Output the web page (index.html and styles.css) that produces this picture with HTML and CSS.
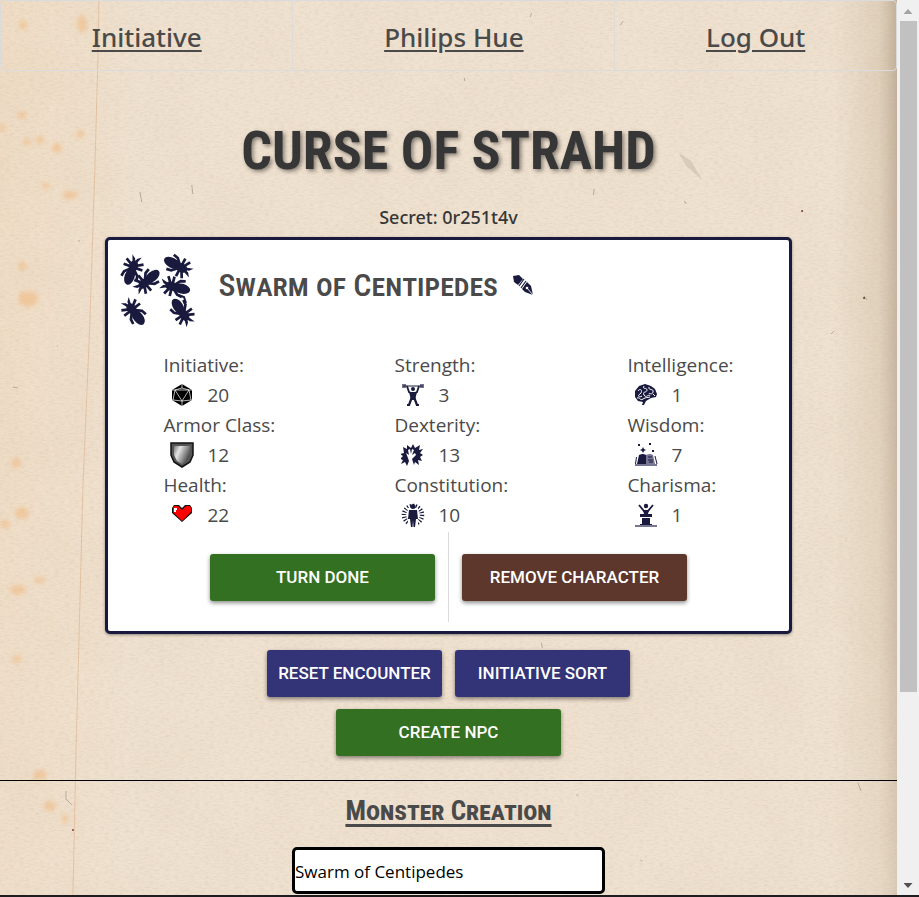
FILE: index.html
```html
<!DOCTYPE html>
<html lang="en">
<head>
<meta charset="utf-8">
<meta name="viewport" content="width=device-width, initial-scale=1">
<title>Curse of Strahd</title>
<link rel="stylesheet" href="styles.css">
</head>
<body>
<div class="page">
  <svg class="paper" aria-hidden="true" viewBox="0 0 898 895" preserveAspectRatio="none">
    <defs>
      <filter id="grain" x="0" y="0" width="100%" height="100%">
        <feTurbulence type="fractalNoise" baseFrequency="0.2 0.6" numOctaves="3" seed="4"/>
        <feColorMatrix values="0 0 0 0 .5  0 0 0 0 .4  0 0 0 0 .28  .9 0 0 0 -.36"/>
      </filter>
      <filter id="mottle" x="0" y="0" width="100%" height="100%">
        <feTurbulence type="fractalNoise" baseFrequency="0.015" numOctaves="3" seed="9"/>
        <feColorMatrix values="0 0 0 0 .72  0 0 0 0 .6  0 0 0 0 .46  .9 0 0 0 -.34"/>
      </filter>
      <filter id="soft"><feGaussianBlur stdDeviation="2"/></filter>
      <linearGradient id="edge">
        <stop offset="0" stop-color="#f0c898" stop-opacity=".2"/>
        <stop offset=".1" stop-color="#f0cf9c" stop-opacity=".1"/>
        <stop offset=".14" stop-color="#f0cf9c" stop-opacity="0"/>
        <stop offset=".93" stop-color="#a08c68" stop-opacity="0"/>
        <stop offset=".98" stop-color="#a08c68" stop-opacity=".2"/>
        <stop offset="1" stop-color="#80684a" stop-opacity=".42"/>
      </linearGradient>
      <linearGradient id="fade" x2="0" y2="1">
        <stop offset="0" stop-color="#fff"/><stop offset=".55" stop-color="#fff" stop-opacity=".8"/><stop offset="1" stop-color="#fff" stop-opacity=".45"/>
      </linearGradient>
      <mask id="fademask"><rect width="898" height="895" fill="url(#fade)"/></mask>
    </defs>
    <rect width="898" height="895" fill="#f0e2d1"/>
    <rect width="898" height="895" filter="url(#mottle)" opacity=".3"/>
    <rect width="898" height="895" fill="url(#edge)" mask="url(#fademask)"/>
    <rect width="898" height="895" filter="url(#grain)" opacity=".42"/>
    <path d="M99 0 98 60 95 167 90 322 83 487 79 642 76 754 73 895" fill="none" stroke="#d9a67c" stroke-opacity=".5"/>
    <g fill="#f0ac65" fill-opacity=".42" filter="url(#soft)">
      <ellipse cx="23" cy="25" rx="4" ry="5"/><ellipse cx="82" cy="24" rx="5" ry="9"/><ellipse cx="22" cy="115" rx="4" ry="4"/>
      <ellipse cx="80" cy="134" rx="4" ry="4"/><ellipse cx="40" cy="140" rx="4" ry="4"/><ellipse cx="57" cy="148" rx="5" ry="5"/>
      <ellipse cx="27" cy="142" rx="4" ry="3"/><ellipse cx="2" cy="128" rx="3" ry="4"/><ellipse cx="70" cy="195" rx="8" ry="4"/>
      <ellipse cx="46" cy="186" rx="4" ry="3"/><ellipse cx="22" cy="266" rx="4" ry="4"/><ellipse cx="28" cy="299" rx="10" ry="8"/>
      <ellipse cx="16" cy="463" rx="5" ry="5"/><ellipse cx="22" cy="513" rx="7" ry="6"/><ellipse cx="5" cy="524" rx="5" ry="4"/>
      <ellipse cx="18" cy="590" rx="8" ry="5"/><ellipse cx="40" cy="580" rx="6" ry="3"/><ellipse cx="17" cy="659" rx="4" ry="4"/>
      <ellipse cx="40" cy="775" rx="7" ry="5"/><ellipse cx="50" cy="806" rx="6" ry="5"/><ellipse cx="65" cy="819" rx="3" ry="5"/>
    </g>
    <g stroke="#807466" stroke-opacity=".5" fill="none">
      <path d="m531 17 1-4m89 12 3-4m-159 57v3M140 192l2 10m51-8-1-9m402 10 1-6m90 12 2 3M13 387l5 1m60-147h2m-23 105h1M865 296l3 4m-36 34 3-3m24 452 3 8M542 643l1 5m-88 69 8-8M66 791v8l6 6M641 860l2 1m-38 16 1 1m-29-83h2"/>
    </g>
    <path d="m679 152 8 14 16 14-11-19z" fill="#8d7c66" fill-opacity=".2"/>
    <circle cx="865" cy="298" r="1" fill="#4b3d32"/>
    <circle cx="803" cy="211" r="1" fill="#7a3524"/>
    <circle cx="73" cy="830" r="1" fill="#7a4a2e"/>
  </svg>

  <nav class="nav">
    <a href="#initiative">Initiative</a>
    <a href="#hue">Philips Hue</a>
    <a href="#logout">Log Out</a>
  </nav>

  <main>
    <h1>CURSE OF STRAHD</h1>
    <p class="secret">Secret: 0r251t4v</p>

    <section class="card">
      <header class="card-head">
        <svg class="portrait" viewBox="5 7 76 76" aria-hidden="true">
          <defs>
            <g id="bug">
              <ellipse cy="7" rx="5" ry="8.500"/>
              <ellipse cy="-4" rx="4.500" ry="6"/>
              <path d="M-2-7-5-15-1-12 0-9 1-12 5-15 2-7z"/>
              <path d="M-2-5-9-9M2-5 9-9M-2-3-10-3M2-3 10-3M-2-1-7 4-8 9M2-1 7 4 8 9" fill="none" stroke="#191a3d" stroke-width="2.700"/>
            </g>
          </defs>
          <g fill="#191a3d">
            <use href="#bug" transform="translate(17 25) rotate(20)"/>
            <use href="#bug" transform="translate(32 36) rotate(230)"/>
            <use href="#bug" transform="translate(63 21) rotate(118)"/>
            <use href="#bug" transform="translate(60 42) rotate(284)"/>
            <use href="#bug" transform="translate(19 67) rotate(322)"/>
            <use href="#bug" transform="translate(67 67) rotate(145)"/>
            <path d="m63 50 6 2 2 6" fill="none" stroke="#191a3d" stroke-width="2"/>
          </g>
        </svg>
        <h2>Swarm of Centipedes</h2>
        <button class="edit" type="button" aria-label="Edit name">
          <svg viewBox="0 0 24 24" aria-hidden="true">
            <path fill="#191a3d" d="M2 3 8 2 12 6 7 12 3 9z"/>
            <path d="m8 13 5-7m-3 9 5-7" stroke="#191a3d" stroke-width="1.200"/>
            <path fill="#191a3d" d="m11 16 5-7 4 4 2 9-8-3z"/>
            <circle cx="16" cy="15" r="1.300" fill="#fff"/><path d="m16 15 6 7" stroke="#fff" stroke-width=".9"/>
          </svg>
        </button>
      </header>

      <div class="stats">
        <dl>
          <dt>Initiative:</dt>
          <dd><svg viewBox="0 0 24 24" aria-hidden="true"><path d="m12 1 10 6v10l-10 6-10-6V7z"/><path d="M12 1v4L5 7m7-2 7 2M5 7h14l-7 11zM2 7h3L3 17l9 1 9-1L19 7h3M2 17h1m18 0h1M12 18v5" fill="none" stroke="#fff" stroke-width=".7"/></svg>20</dd>
          <dt>Armor Class:</dt>
          <dd><svg class="tall" viewBox="0 0 24 26" aria-hidden="true"><defs><linearGradient id="steel" x2="1" y2=".5"><stop stop-color="#777"/><stop offset=".35" stop-color="#e4e4e4"/><stop offset="1" stop-color="#484848"/></linearGradient></defs><path d="M1 1h22v12l-3 7-8 5-8-5-3-7z" fill="#555" stroke="#111" stroke-width="1.500"/><path d="M4 4h16v9l-3 6-5 3-5-3-3-6z" fill="url(#steel)"/></svg>12</dd>
          <dt>Health:</dt>
          <dd><svg viewBox="0 0 24 24" aria-hidden="true"><path d="M4 2h5l3 3 3-3h5l2 3v5L12 19 2 10V5z" fill="#111"/><path d="M4 3h4l4 4 4-4h4l1 2v4l-9 9-9-9V5z" fill="#f00"/><path d="M4 5h3v2H6v2H4z" fill="#fff"/></svg>22</dd>
        </dl>
        <dl>
          <dt>Strength:</dt>
          <dd><svg viewBox="0 0 24 24" aria-hidden="true"><g stroke="#191a3d" fill="none"><path d="M2 3h20" stroke-width="1"/><path d="M2 1v4m2-4v4m16-4v4m2-4v4" stroke-width="1.200"/><path d="m6 3 2 6 4 2 4-2 2-6" stroke-width="1.800"/><path d="M11 14 8 22m5-8 3 8M6 22h3m6 0h3" stroke-width="2.200"/></g><g fill="#191a3d"><circle cx="12" cy="6" r="2"/><path d="M8 9h8l-2 8h-4z"/></g></svg>3</dd>
          <dt>Dexterity:</dt>
          <dd><svg viewBox="0 0 24 24" aria-hidden="true"><path fill="#191a3d" d="m2 4 4 2V2l4 3 2-4 2 4 5-3-1 5 4-1-3 4 3 2-3 2 2 4-4-1 1 5-4-3-1 3-2-6 4-4-1-2-3 2 2-5-2-1-1 5-1-5-2 1 1 5-3-2 2 5 1 3-2 5-2-4-4 2 2-4-3-1 3-3-3-2 4-1z"/></svg>13</dd>
          <dt>Constitution:</dt>
          <dd><svg viewBox="0 0 24 24" aria-hidden="true"><circle cx="12" cy="12" r="9" fill="none" stroke="#191a3d" stroke-width="4.500" stroke-dasharray="1.100 1.700"/><path fill="#fff" d="M7 5h10v19H7z"/><g fill="#191a3d"><circle cx="12" cy="3.500" r="2.500"/><path d="M8 7h8l1 9h-2l-1 8h-1.500l-.5-7-.5 7H10l-1-8H7z"/></g></svg>10</dd>
        </dl>
        <dl>
          <dt>Intelligence:</dt>
          <dd><svg viewBox="0 0 24 24" aria-hidden="true"><path fill="#191a3d" d="M5 3 11 1 17 3 21 6 23 11 22 14 17 15 12 18 10 22 8 22 9 19 4 18 1 14 1 8z"/><path d="M4 8c3-4 5 1 2 3s-1 4 2 2M10 3c-2 4 3 1 3 4s-5 1-3 5 5-2 6 1M15 4c-1 4 5 1 4 5s-4 0-4 2M3 15c3-1 3 3 6 1s4-1 7-2M19 11l2 2" fill="none" stroke="#fff" stroke-width="1"/></svg>1</dd>
          <dt>Wisdom:</dt>
          <dd><svg viewBox="0 0 24 24" aria-hidden="true"><path fill="#191a3d" d="M5 12q4-2 7 0v9H3zM9 4l1 2 2 1-2 1-1 2-1-2-2-1 2-1zM4 1h2v2H4zm11-1h2v2h-2zm3 7h2v2h-2zM2 14h1L2 21H1z"/><path fill="#777795" d="M12 12q4-2 7 0l2 9h-9zM1 21h22v2H1z"/><path d="M14 14h4m-4 3h5m-4 2h4m2-6 2 8" stroke="#191a3d"/></svg>7</dd>
          <dt>Charisma:</dt>
          <dd><svg viewBox="0 0 24 24" aria-hidden="true"><path d="m5 2 5 6h4l5-6" fill="none" stroke="#191a3d" stroke-width="1.800"/><g fill="#191a3d"><circle cx="12" cy="3" r="2.200"/><path d="M9 7h6l-1 4h-4zM6 11h12v3H6zM8 15h8v6H8zM6 21h12v1H6z"/></g><path fill="#777795" d="M1 22h22v2H1z"/></svg>1</dd>
        </dl>
      </div>

      <div class="actions">
        <div class="action"><button class="btn wide green" type="button">TURN DONE</button></div>
        <div class="action"><button class="btn wide brown" type="button">REMOVE CHARACTER</button></div>
      </div>
    </section>

    <div class="controls">
      <button class="btn blue" type="button">RESET ENCOUNTER</button>
      <button class="btn blue" type="button">INITIATIVE SORT</button>
    </div>
    <div class="controls">
      <button class="btn wide green" type="button">CREATE NPC</button>
    </div>

    <section class="creation">
      <h2><label for="monster">Monster Creation</label></h2>
      <input id="monster" type="text" value="Swarm of Centipedes">
    </section>
  </main>
</div>
<div class="scrollbar" aria-hidden="true">
  <span class="arrow up"></span>
  <span class="thumb"></span>
  <span class="arrow down"></span>
</div>
</body>
</html>
```

FILE: styles.css
```css
* { box-sizing: border-box; }

body {
  margin: 0;
  height: 100vh;
  display: flex;
  overflow: hidden;
  border-bottom: 2px solid #1d1d20;
  font-family: "Open Sans", "Noto Sans", sans-serif;
  color: #4a4a4a;
}

.page {
  position: relative;
  flex: 1;
  min-width: 0;
  overflow: hidden;
  isolation: isolate;
}

.paper {
  position: absolute;
  inset: 0;
  width: 100%;
  height: 100%;
  z-index: -1;
}

.nav {
  display: flex;
  border: 1px solid #d9dbdd;
  border-radius: 4px;
  font-family: "Noto Sans", sans-serif;
}

.nav a {
  flex: 1 1 auto;
  padding: 18px 0 15px;
  text-align: center;
  font-size: 26px;
  font-weight: 500;
  line-height: 36px;
  color: #4a4a4a;
  text-underline-offset: 3px;
}

.nav a + a { border-left: 1px solid #dfdcd8; }

h1, h2 {
  margin: 0;
  font-family: "Roboto Condensed", "Liberation Serif", serif;
  font-weight: 700;
}

h1 {
  margin-top: 48px;
  text-align: center;
  font-size: 54px;
  line-height: 64px;
  color: #363636;
  text-shadow: 2px 2px 4px rgba(0, 0, 0, .45);
}

.secret {
  margin: 20px 0 6px;
  text-align: center;
  font-family: "Noto Sans", sans-serif;
  font-size: 18px;
  font-weight: 500;
  line-height: 28px;
  color: #363636;
}

.card {
  width: 76.500%;
  margin: 0 auto;
  padding: 12px 12px 9px;
  background: #fff;
  border: 3px solid #191a3d;
  border-radius: 5px;
  box-shadow: 0 1px 3px rgba(0, 0, 0, .4);
}

.card-head {
  display: flex;
  align-items: center;
}

.portrait { width: 76px; height: 76px; margin-right: 22px; }

.card-head h2 {
  padding-bottom: 10px;
  font-size: 32px;
  font-weight: 500;
  font-variant: small-caps;
  line-height: 44px;
}

.edit {
  margin: 0 0 10px 13px;
  padding: 0;
  border: 0;
  background: none;
  width: 24px;
  height: 24px;
}

.edit svg { display: block; }

.stats {
  display: flex;
  justify-content: space-between;
  padding: 22px 43px 0;
}

dl { margin: 0; font-size: 19px; line-height: 30px; }

dd {
  display: flex;
  align-items: center;
  height: 30px;
  margin: 0;
}

dd svg { width: 24px; height: 24px; margin: 0 13px 0 7px; }

dd .tall { height: 26px; }

.actions {
  display: flex;
  justify-content: center;
  padding-top: 2px;
}

.action { padding: 22px 13px 21px; }

.action + .action { border-left: 1px solid #dbdbdb; }

.btn {
  width: 175px;
  height: 47px;
  padding: 0 0 2px;
  border: 0;
  border-radius: 3px;
  box-shadow: 0 2px 4px rgba(0, 0, 0, .45);
  font: 500 17px Roboto, sans-serif;
  color: #fff;
  white-space: nowrap;
}

.wide { width: 225px; }
.green { background: #347021; }
.brown { background: #5d372c; }
.blue { background: #333377; }

.controls {
  display: flex;
  justify-content: center;
  gap: 13px;
  margin-top: 16px;
}

.controls + .controls { margin-top: 12px; }

.creation {
  margin-top: 24px;
  padding-top: 8px;
  border-top: 1px solid #000;
  text-align: center;
}

.creation h2 {
  font-size: 27px;
  font-variant: small-caps;
  line-height: 44px;
  text-decoration: underline;
  text-decoration-thickness: 3px;
  text-underline-offset: 4px;
}

.creation input {
  display: block;
  width: 313px;
  height: 47px;
  margin: 14px auto 0;
  padding: 2px 0 0;
  border: 3px solid #000;
  border-radius: 5px;
  background: #fff;
  font: 17px "Open Sans", sans-serif;
  color: #000;
}

.scrollbar {
  width: 22px;
  display: flex;
  flex-direction: column;
  align-items: center;
  background: #f0f0f0;
}

.thumb {
  width: 17px;
  height: 75%;
  background: #c1c1c1;
}

.arrow {
  width: 9px;
  height: 5px;
  background: #a3a3a3;
}

.up {
  margin: 9px 0 7px;
  clip-path: polygon(50% 0, 100% 100%, 0 100%);
}

.down {
  margin: auto 0 7px;
  background: #505050;
  clip-path: polygon(0 0, 100% 0, 50% 100%);
}
```
